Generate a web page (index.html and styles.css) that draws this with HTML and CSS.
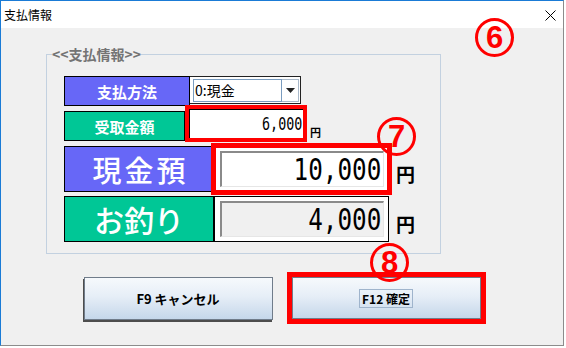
FILE: index.html
```html
<!DOCTYPE html>
<html lang="ja">
<head>
  <meta charset="UTF-8" />
  <title>支払情報</title>
  <link rel="stylesheet" href="styles.css">
</head>
<body>
  <div class="window">
    <div class="titlebar">
      <span class="title">支払情報</span>
      <svg class="close" width="11" height="11" viewBox="0 0 11 11">
        <path d="M0.5 0.5 L10.5 10.5 M10.5 0.5 L0.5 10.5" stroke="#000" stroke-width="1" fill="none"/>
      </svg>
    </div>

    <div class="client">
      <fieldset class="group">
        <legend>&lt;&lt;支払情報&gt;&gt;</legend>

        <div class="row row-method">
          <div class="label label-blue label-method">支払方法</div>
          <div class="combo">
            <span class="combo-field">0:現金</span>
            <span class="combo-btn">
              <svg width="9" height="5" viewBox="0 0 9 5"><path d="M0 0 H9 L4.5 5 Z" fill="#222"/></svg>
            </span>
          </div>
        </div>

        <div class="row row-received">
          <div class="label label-green label-received">受取金額</div>
          <div class="amount-box mark"><span class="num num-small">6,000</span></div>
          <span class="yen yen-small">円</span>
        </div>

        <div class="row row-cash">
          <div class="label label-blue label-big">現金預</div>
          <div class="cash-box mark-big">
            <div class="cash-field"><span class="num num-big">10,000</span></div>
          </div>
          <span class="yen yen-big">円</span>
        </div>

        <div class="row row-change">
          <div class="label label-green label-big label-change">お釣り</div>
          <div class="cash-box">
            <div class="cash-field readonly"><span class="num num-big">4,000</span></div>
          </div>
          <span class="yen yen-big">円</span>
        </div>
      </fieldset>

      <div class="buttons">
        <button class="btn btn-cancel">F9 キャンセル</button>
        <button class="btn btn-ok"><span class="focus">F12 確定</span></button>
      </div>
    </div>

    <span class="badge badge-6">6</span>
    <span class="badge badge-7">7</span>
    <span class="badge badge-8">8</span>
  </div>
</body>
</html>
```

FILE: styles.css
```css
body {
  margin: 0;
  background: #fff;
  font-family: "Noto Sans CJK JP", sans-serif;
  color: #000;
}

.window {
  position: relative;
  width: 562px;
  height: 344px;
  border-top: 1px solid #1a7bd6;
  border-left: 1px solid #1a7bd6;
  border-right: 1px solid #8c8c8c;
  border-bottom: 1px solid #8c8c8c;
  display: flex;
  flex-direction: column;
}

.titlebar {
  height: 27px;
  background: #fff;
  display: flex;
  align-items: center;
  justify-content: space-between;
  padding: 0 7px 0 3px;
}

.title {
  font-size: 12px;
  line-height: 14px;
}

.close {
  display: block;
  margin-top: 1px;
}

.client {
  flex: 1;
  background: #f0f0f0;
  padding-top: 16px;
}

.group {
  box-sizing: border-box;
  width: 395px;
  min-width: 0;
  margin: 0 0 0 45px;
  padding: 12px 0 11px 17px;
  border: 1px solid #c3d1e0;
}

.group legend {
  margin-left: -12px;
  padding: 0;
  font-size: 14px;
  line-height: 20px;
  font-weight: bold;
  color: #747474;
}

.row {
  display: flex;
  align-items: flex-start;
}

.row-received { margin-top: 5px; }
.row-cash { margin-top: 5px; }
.row-change { margin-top: 4px; }

.label {
  box-sizing: border-box;
  border: 1px solid #000;
  display: flex;
  align-items: center;
  justify-content: center;
  color: #fff;
  font-weight: bold;
}

.label-blue { background: #6767f7; }
.label-green { background: #00c796; }

.label-method {
  width: 126px;
  height: 30px;
  font-size: 15px;
}

.label-received {
  width: 121px;
  height: 30px;
  font-size: 15px;
}

.label-big {
  width: 150px;
  height: 46px;
  font-size: 29px;
  font-weight: 500;
  letter-spacing: 3px;
  padding-left: 3px;
}

.label-change {
  font-size: 30px;
  letter-spacing: 0;
  padding-left: 0;
}

.combo {
  box-sizing: border-box;
  width: 111px;
  height: 28px;
  border: 1px solid #222;
  border-left: none;
  background: #fff;
  padding: 2px 1px 0 3px;
  display: flex;
}

.combo-field {
  flex: 1;
  height: 23px;
  box-sizing: border-box;
  border: 1px solid #7a9cbf;
  font-size: 14px;
  line-height: 21px;
  padding-left: 1px;
}

.combo-btn {
  box-sizing: border-box;
  width: 17px;
  height: 23px;
  border: 1px solid #a9b9ca;
  border-left: none;
  display: flex;
  align-items: center;
  justify-content: center;
}

.amount-box {
  box-sizing: border-box;
  width: 114px;
  height: 29px;
  margin: -2px 0 0 4px;
  background: #fff;
  border-left: 1px solid #000;
  border-top: 1px solid #000;
  text-align: right;
  padding-right: 1px;
  line-height: 27px;
}

.mark {
  outline: 4px solid #f00;
}

.mark-big {
  outline: 5px solid #f00;
  outline-offset: -2px;
}

.num {
  display: inline-block;
  font-family: "DejaVu Sans Mono", monospace;
  transform-origin: right center;
}

.num-small {
  font-size: 18px;
  transform: scaleX(0.74);
}

.num-big {
  font-size: 30px;
  transform: scaleX(0.81);
}

.cash-box {
  box-sizing: border-box;
  width: 175px;
  height: 46px;
  border: 1px solid #000;
  background: #fff;
  padding: 4px 4px 4px 5px;
}

.cash-field {
  box-sizing: border-box;
  height: 100%;
  background: #fff;
  border-top: 2px solid #8a8a8a;
  border-left: 2px solid #8a8a8a;
  border-right: 1px solid #e6e6e6;
  border-bottom: 1px solid #e6e6e6;
  text-align: right;
  padding-right: 2px;
  line-height: 33px;
}

.cash-field.readonly {
  background: #f0f0f0;
}

.yen {
  align-self: flex-end;
  font-weight: bold;
}

.yen-small {
  font-size: 11px;
  line-height: 11px;
  margin: 0 0 3px 7px;
}

.yen-big {
  font-size: 19px;
  line-height: 19px;
  margin: 0 0 9px 7px;
}

.buttons {
  display: flex;
  justify-content: center;
  gap: 19px;
  margin-top: 23px;
}

.btn {
  box-sizing: border-box;
  width: 189px;
  height: 43px;
  border: 1px solid #707c8a;
  background: linear-gradient(#f6f9fc, #e6eef7 45%, #c5d7ea);
  font-family: "Noto Sans CJK JP", sans-serif;
  font-size: 13px;
  font-weight: bold;
  color: #000;
  padding: 0;
}

.btn-cancel {
  box-shadow: -1px 2px 0 #4d4d4d;
}

.btn-ok {
  height: 42px;
  font-size: 12px;
  outline: 5px solid #f00;
}

.focus {
  border: 1px solid #9fb4cc;
  padding: 0 2px;
}

.badge {
  position: absolute;
  box-sizing: border-box;
  width: 39px;
  height: 39px;
  border: 3.5px solid #f00;
  border-radius: 50%;
  display: flex;
  align-items: center;
  justify-content: center;
  color: #f00;
  font-family: "Liberation Sans", sans-serif;
  font-weight: bold;
  font-size: 31px;
  line-height: 1;
}

.badge-6 { left: 474px; top: 17px; }
.badge-7 { left: 376px; top: 116px; }
.badge-8 { left: 369px; top: 242px; }
```
